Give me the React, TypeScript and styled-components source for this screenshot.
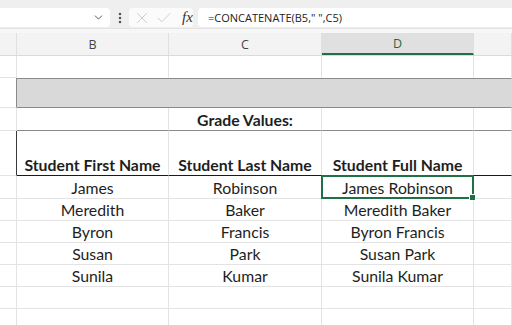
import React from "react";
import styled, { createGlobalStyle, css } from "styled-components";
import { ChevronDown, EllipsisVertical, X, Check } from "lucide-react";

const Global = createGlobalStyle`
  html, body { margin: 0; padding: 0; background: #ffffff; }
  body { width: 512px; height: 325px; overflow: hidden; }
`;

const Page = styled.div`
  width: 512px;
  height: 325px;
  overflow: hidden;
  background: #ffffff;
`;

const Toolbar = styled.div`
  height: 29px;
  box-sizing: border-box;
  background: #efefef;
  border-bottom: 1px solid #e2e2e2;
  display: flex;
  align-items: flex-start;
  padding-top: 8px;
`;

const NameBox = styled.div`
  width: 114px;
  margin-left: -4px;
  height: 19px;
  background: #ffffff;
  border-radius: 4px;
  display: flex;
  align-items: center;
  justify-content: flex-end;
  padding-right: 5px;
  box-sizing: border-box;
  color: #444;
`;

const Dots = styled.div`
  width: 19px;
  height: 19px;
  display: flex;
  align-items: center;
  justify-content: center;
  color: #555;
`;

const IconBox = styled.div`
  width: 64px;
  height: 19px;
  background: #fbfbfb;
  border-radius: 4px;
  display: flex;
  align-items: center;
  padding-left: 4px;
  box-sizing: border-box;
  gap: 4px;
  color: #c4c4c4;
`;

const Fx = styled.span`
  font-family: "Liberation Serif", "DejaVu Serif", serif;
  font-style: italic;
  font-size: 15px;
  color: #333;
  margin-left: 5px;
  line-height: 1;
`;

const FormulaBox = styled.div`
  flex: 1;
  margin-left: 5px;
  height: 19px;
  background: #ffffff;
  border-radius: 4px 0 0 4px;
  display: flex;
  align-items: center;
  padding-left: 10px;
  font-family: "Open Sans", "Noto Sans", sans-serif;
  font-size: 11px;
  color: #222;
  white-space: pre;
`;

const Spacer = styled.div`
  height: 4px;
  background: #f7f7f7;
`;

const cols = "17px 152px 153px 152px 1fr";

const HeaderRow = styled.div`
  display: grid;
  grid-template-columns: ${cols};
  height: 23px;
  background: #f3f3f3;
  border-bottom: 1px solid #dadada;
  box-sizing: border-box;
`;

const ColHead = styled.div<{ $active?: boolean }>`
  display: flex;
  align-items: center;
  justify-content: center;
  font-family: "Open Sans", "Noto Sans", sans-serif;
  font-size: 12.5px;
  color: #444;
  border-right: 1px solid #e0e0e0;
  box-sizing: border-box;
  ${(p) =>
    p.$active &&
    css`
      background: #e0e0e0;
      color: #1f6b3e;
      border-bottom: 2px solid #1e7145;
    `}
`;

const Sheet = styled.div`
  display: grid;
  grid-template-columns: ${cols};
  grid-template-rows: 22px 30px 23px 45px 23px 22px 22px 22px 22px 22px 22px;
  font-family: "Lato", "Open Sans", sans-serif;
  font-size: 15.8px;
  color: #1e1e1e;
`;

type CellProps = {
  $bottom?: string;
  $right?: string;
  $bold?: boolean;
  $valign?: "center" | "end";
  $span?: number;
  $bg?: string;
  $top?: string;
};

const Cell = styled.div<CellProps>`
  box-sizing: border-box;
  display: flex;
  justify-content: center;
  align-items: ${(p) => (p.$valign === "end" ? "flex-end" : "center")};
  padding-bottom: ${(p) => (p.$valign === "end" ? "1px" : "0")};
  border-right: 1px solid ${(p) => p.$right || "#e3e3e3"};
  border-bottom: 1px solid ${(p) => p.$bottom || "#e3e3e3"};
  ${(p) => p.$top && css`border-top: 1px solid ${p.$top};`}
  font-weight: ${(p) => (p.$bold ? 700 : 400)};
  white-space: nowrap;
  ${(p) => p.$span && css`grid-column: span ${p.$span};`}
  ${(p) => p.$bg && css`background: ${p.$bg};`}
`;

const SelectedCell = styled(Cell)`
  position: relative;
  border: 2px solid #1e7145;
  margin: -1px 0 0 -1px;
`;

const Handle = styled.span`
  position: absolute;
  right: -4px;
  bottom: -4px;
  width: 5px;
  height: 5px;
  background: #1e7145;
  border: 1px solid #fff;
`;

const data = [
  ["James", "Robinson", "James Robinson"],
  ["Meredith", "Baker", "Meredith Baker"],
  ["Byron", "Francis", "Byron Francis"],
  ["Susan", "Park", "Susan Park"],
  ["Sunila", "Kumar", "Sunila Kumar"],
];

const DARK = "#8a8a8a";

export default function App() {
  return (
    <Page>
      <Global />
      <Toolbar>
        <NameBox>
          <ChevronDown size={13} strokeWidth={1.6} />
        </NameBox>
        <Dots>
          <EllipsisVertical size={14} strokeWidth={2.4} />
        </Dots>
        <IconBox>
          <X size={18} strokeWidth={1.1} />
          <Check size={18} strokeWidth={1.1} />
          <Fx>fx</Fx>
        </IconBox>
        <FormulaBox>{'=CONCATENATE(B5," ",C5)'}</FormulaBox>
      </Toolbar>
      <Spacer />
      <HeaderRow>
        <ColHead />
        <ColHead>B</ColHead>
        <ColHead>C</ColHead>
        <ColHead $active>D</ColHead>
        <ColHead />
      </HeaderRow>
      <Sheet>
        {/* row 1 */}
        <Cell />
        <Cell $bottom="transparent" />
        <Cell $bottom="transparent" />
        <Cell $bottom="transparent" />
        <Cell $bottom="transparent" />
        {/* gray band */}
        <Cell $right={DARK} />
        <Cell $span={4} $bg="#d9d9d9" $top={DARK} $bottom={DARK} $right="transparent" />
        {/* grade values */}
        <Cell />
        <Cell $bottom={DARK} />
        <Cell $bottom={DARK} $bold>
          Grade Values:
        </Cell>
        <Cell $bottom={DARK} />
        <Cell $bottom={DARK} />
        {/* headers */}
        <Cell $right="#3a3a3a" />
        <Cell $bottom="#1a1a1a" $bold $valign="end">
          Student First Name
        </Cell>
        <Cell $bottom="#1a1a1a" $bold $valign="end">
          Student Last Name
        </Cell>
        <Cell $bottom="#1a1a1a" $bold $valign="end">
          Student Full Name
        </Cell>
        <Cell $bottom="#1a1a1a" />
        {data.map((r, i) => (
          <React.Fragment key={i}>
            <Cell />
            <Cell>{r[0]}</Cell>
            <Cell>{r[1]}</Cell>
            {i === 0 ? (
              <SelectedCell>
                {r[2]}
                <Handle />
              </SelectedCell>
            ) : (
              <Cell>{r[2]}</Cell>
            )}
            <Cell />
          </React.Fragment>
        ))}
        {[0, 1].map((k) => (
          <React.Fragment key={"e" + k}>
            <Cell />
            <Cell />
            <Cell />
            <Cell />
            <Cell />
          </React.Fragment>
        ))}
      </Sheet>
    </Page>
  );
}
